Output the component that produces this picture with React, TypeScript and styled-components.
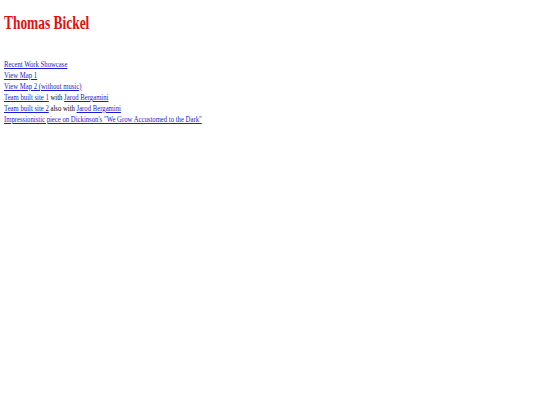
import styled, { createGlobalStyle } from 'styled-components';

const GlobalStyle = createGlobalStyle`
  html, body {
    margin: 0;
    background: #ffffff;
  }
  body {
    padding: 4px;
    font-family: "Liberation Serif", "Times New Roman", serif;
    font-size: 9px;
    line-height: 11px;
    color: #000000;
  }
`;

// the reference text is narrow and tall, so squeeze the page sideways
const Page = styled.div`
  display: flex;
  flex-direction: column;
  transform: scaleX(0.745);
  transform-origin: left top;
`;

const Title = styled.h1`
  margin: 7px 0 0;
  font-size: 18px;
  line-height: 24px;
  font-weight: bold;
  color: #e01010;
`;

const LinkList = styled.div`
  margin-top: 24px;
  display: flex;
  flex-direction: column;
`;

const Row = styled.div`
  white-space: nowrap;
`;

const Link = styled.a`
  color: #1a1ad0;
  text-decoration: underline;
`;

export default function App() {
  return (
    <>
      <GlobalStyle />
      <Page>
        <Title>Thomas Bickel</Title>
        <LinkList>
          <Row><Link href="#">Recent Work Showcase</Link></Row>
          <Row><Link href="#">View Map 1</Link></Row>
          <Row><Link href="#">View Map 2 (without music)</Link></Row>
          <Row>
            <Link href="#">Team built site 1</Link> with <Link href="#">Jarod Bergamini</Link>
          </Row>
          <Row>
            <Link href="#">Team built site 2</Link> also with <Link href="#">Jarod Bergamini</Link>
          </Row>
          <Row>
            <Link href="#">Impressionistic piece on Dickinson's "We Grow Accustomed to the Dark"</Link>
          </Row>
        </LinkList>
      </Page>
    </>
  );
}
